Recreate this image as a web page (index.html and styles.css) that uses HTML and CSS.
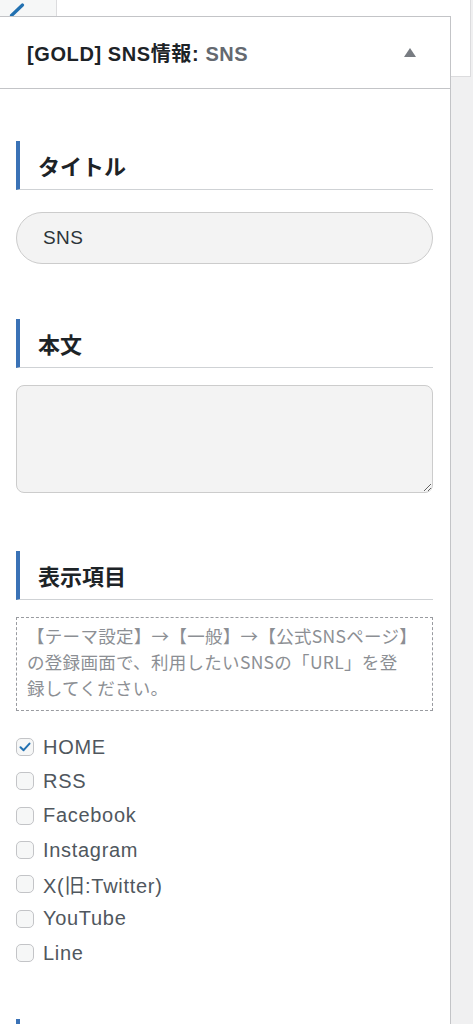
FILE: index.html
```html
<!DOCTYPE html>
<html lang="ja">
  <head>
    <meta charset="utf-8">
    <title>SNS情報ウィジェット</title>
    <meta name="viewport" content="width=device-width, initial-scale=1" />
    <link rel="stylesheet" href="styles.css">
  </head>
  <body>
    <div class="prev">
      <div class="prev-handle">
        <svg width="16" height="14" viewBox="0 0 16 14"><path d="M2.5 12.5 L13.5 2" stroke="#2271b1" stroke-width="3.2" stroke-linecap="round"/></svg>
      </div>
      <div class="prev-title"></div>
    </div>

    <div class="stage">
      <section class="widget">
        <header class="widget-top">
          <h3 class="widget-title">[GOLD] SNS情報:<span class="in-title"> SNS</span></h3>
          <span class="toggle"></span>
        </header>

        <div class="widget-inside">
          <div class="field">
            <h4 class="field-label">タイトル</h4>
            <input class="text-input" type="text" value="SNS">
          </div>

          <div class="field">
            <h4 class="field-label">本文</h4>
            <textarea class="text-area"></textarea>
          </div>

          <div class="field">
            <h4 class="field-label">表示項目</h4>
            <p class="note">【テーマ設定】→【一般】→【公式SNSページ】の登録画面で、利用したいSNSの「URL」を登録してください。</p>
            <ul class="checks">
              <li><span class="box checked"><svg width="12" height="10" viewBox="0 0 12 10"><path d="M1.5 5.2 L4.6 8.2 L10.5 1.6" fill="none" stroke="#2271b1" stroke-width="2" stroke-linecap="round" stroke-linejoin="round"/></svg></span>HOME</li>
              <li><span class="box"></span>RSS</li>
              <li><span class="box"></span>Facebook</li>
              <li><span class="box"></span>Instagram</li>
              <li><span class="box"></span>X(旧:Twitter)</li>
              <li><span class="box"></span>YouTube</li>
              <li><span class="box"></span>Line</li>
            </ul>
          </div>

          <div class="field">
            <h4 class="field-label"></h4>
          </div>
        </div>
      </section>

      <div class="gutter">
        <div class="gutter-top"></div>
      </div>
    </div>
  </body>
</html>
```

FILE: styles.css
```css
body {
  margin: 0;
  height: 1024px;
  background-color: #f0f0f1;
  font-family: "Liberation Sans", "Noto Sans CJK JP", sans-serif;
  color: #1d2327;
  overflow: hidden;
}

.prev {
  display: flex;
  width: 470px;
  height: 16px;
  border-right: 1px solid #dcdcde;
}

.prev-handle {
  width: 57px;
  background-color: #f6f7f7;
  border-right: 1px solid #dcdcde;
  display: flex;
  justify-content: center;
  padding: 3px 22px 0 0;
  box-sizing: border-box;
}

.prev-title {
  flex: 1;
  background-color: #fff;
}

.stage {
  display: flex;
  align-items: flex-start;
}

.widget {
  width: 451px;
  height: 1008px;
  overflow: hidden;
  flex-shrink: 0;
  background-color: #fff;
  border-top: 1px solid #c3c4c7;
  border-right: 1px solid #c3c4c7;
  box-sizing: border-box;
}

.widget-top {
  height: 71px;
  display: flex;
  align-items: center;
  justify-content: space-between;
  padding: 0 34px 0 27px;
  border-bottom: 1px solid #c3c4c7;
}

.widget-title {
  margin: 0;
  font-size: 20px;
  font-weight: 600;
  letter-spacing: 0.6px;
}

.in-title {
  color: #646970;
}

.toggle {
  width: 0;
  height: 0;
  border-left: 6px solid transparent;
  border-right: 6px solid transparent;
  border-bottom: 9px solid #787c82;
}

.gutter {
  flex: 1;
}

.gutter-top {
  height: 60px;
  margin-right: 2px;
  background-color: #fff;
  border-right: 1px solid #dcdcde;
  border-bottom: 1px solid #dcdcde;
}

.widget-inside {
  padding: 52px 17px 0 16px;
}

.field {
  margin-bottom: 49px;
}

.field-label {
  margin: 0 0 17px;
  height: 48px;
  display: flex;
  align-items: center;
  padding-left: 18px;
  border-left: 4px solid #3a72b6;
  border-bottom: 1px solid #cfd2d5;
  font-size: 22px;
  font-weight: bold;
  color: #1d2327;
}

.text-input {
  display: block;
  width: 100%;
  height: 52px;
  margin: 22px 0 55px;
  box-sizing: border-box;
  padding: 0 26px;
  border: 1px solid #cccccc;
  border-radius: 26px;
  background-color: #f3f3f3;
  font-family: inherit;
  font-size: 19px;
  letter-spacing: 0.4px;
  color: #2c3338;
  outline: none;
}

.field:has(.text-input) {
  margin-bottom: 0;
}

.field:has(.text-input) .field-label {
  margin-bottom: 0;
}

.text-area {
  display: block;
  width: 100%;
  height: 108px;
  margin-bottom: 58px;
  box-sizing: border-box;
  border: 1px solid #cccccc;
  border-radius: 8px;
  background-color: #f3f3f3;
  font-family: inherit;
  resize: vertical;
  outline: none;
}

.field:has(.text-area) {
  margin-bottom: 0;
}

.note {
  margin: 0 0 19px;
  padding: 5px 20px 9px 10px;
  border: 1px dashed #999ba0;
  font-family: "Noto Sans CJK JP", sans-serif;
  font-size: 17.5px;
  letter-spacing: 0.3px;
  line-height: 26px;
  color: #8c8f94;
}

.checks {
  list-style: none;
  margin: 0;
  padding: 0;
}

.checks li {
  height: 34.33px;
  display: flex;
  align-items: center;
  font-size: 20px;
  letter-spacing: 0.7px;
  color: #50575e;
}

.box {
  width: 18px;
  height: 18px;
  box-sizing: border-box;
  margin-right: 9px;
  border: 1px solid #c3c4c7;
  border-radius: 5px;
  background-color: #f6f7f7;
  display: flex;
  align-items: center;
  justify-content: center;
}
```
